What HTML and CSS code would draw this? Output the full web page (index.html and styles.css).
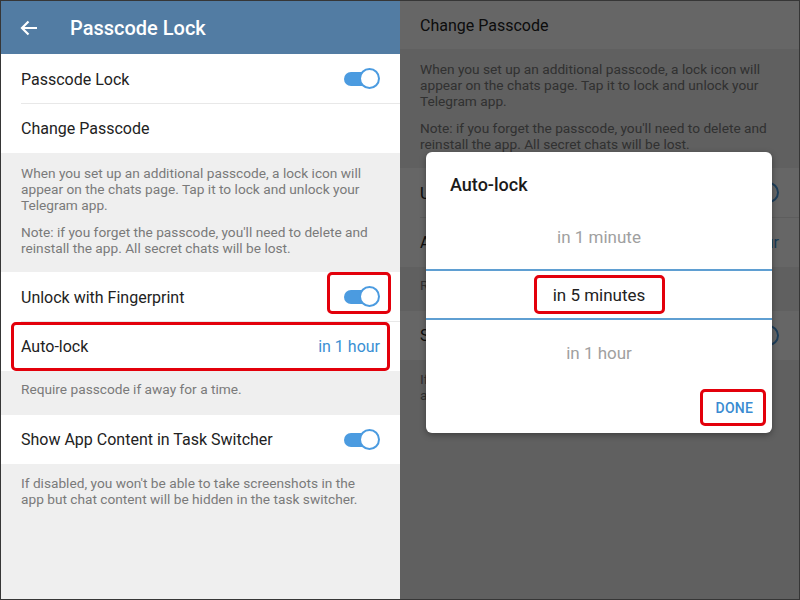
FILE: index.html
```html
<!DOCTYPE html>
<html>
<head>
<meta charset="utf-8">
<link rel="stylesheet" href="styles.css">
</head>
<body>
<div class="frame">
  <section class="panel">
    <header class="appbar">
      <svg class="back" width="18" height="16" viewBox="0 0 18 16"><path d="M17 8H2M8.5 1.5L2 8l6.5 6.5" fill="none" stroke="#fff" stroke-width="2.2"/></svg>
      <h1 class="title">Passcode Lock</h1>
    </header>
    <div class="row divided"><span class="label">Passcode Lock</span><span class="toggle"><span class="thumb"></span></span></div>
    <div class="row"><span class="label">Change Passcode</span></div>
    <div class="info info-main">
      <p>When you set up an additional passcode, a lock icon will appear on the chats page. Tap it to lock and unlock your Telegram app.</p>
      <p>Note: if you forget the passcode, you'll need to delete and reinstall the app. All secret chats will be lost.</p>
    </div>
    <div class="row divided"><span class="label">Unlock with Fingerprint</span><span class="toggle"><span class="thumb"></span><span class="mark mark-toggle"></span></span></div>
    <div class="row autolock"><span class="label">Auto-lock</span><span class="value">in 1 hour</span><span class="mark mark-row"></span></div>
    <div class="info info-short"><p>Require passcode if away for a time.</p></div>
    <div class="row"><span class="label">Show App Content in Task Switcher</span><span class="toggle"><span class="thumb"></span></span></div>
    <div class="info info-fill"><p>If disabled, you won't be able to take screenshots in the app but chat content will be hidden in the task switcher.</p></div>
  </section>

  <section class="panel panel-right">
    <div class="row row-top"><span class="label">Change Passcode</span></div>
    <div class="info info-main">
      <p>When you set up an additional passcode, a lock icon will appear on the chats page. Tap it to lock and unlock your Telegram app.</p>
      <p>Note: if you forget the passcode, you'll need to delete and reinstall the app. All secret chats will be lost.</p>
    </div>
    <div class="row divided"><span class="label">Unlock with Fingerprint</span><span class="toggle"><span class="thumb"></span></span></div>
    <div class="row"><span class="label">Auto-lock</span><span class="value">in 1 hour</span></div>
    <div class="info info-short"><p>Require passcode if away for a time.</p></div>
    <div class="row"><span class="label">Show App Content in Task Switcher</span><span class="toggle"><span class="thumb"></span></span></div>
    <div class="info info-fill"><p>If disabled, you won't be able to take screenshots in the app but chat content will be hidden in the task switcher.</p></div>
    <div class="scrim"></div>
    <div class="dialog">
      <h2 class="dialog-title">Auto-lock</h2>
      <div class="picker">
        <div class="opt dim">in 1 minute</div>
        <div class="opt current"><span class="cur-text">in 5 minutes<span class="mark mark-opt"></span></span></div>
        <div class="opt dim">in 1 hour</div>
      </div>
      <div class="actions"><span class="done">DONE<span class="mark mark-done"></span></span></div>
    </div>
  </section>
</div>
</body>
</html>
```

FILE: styles.css
```css
* { box-sizing: border-box; }
html, body { margin: 0; padding: 0; }
body {
  font-family: Roboto, "Noto Sans", sans-serif;
  background: #333;
}
.frame {
  width: 800px;
  height: 600px;
  border: 1px solid #363636;
  display: flex;
  overflow: hidden;
  background: #efefef;
}
.panel {
  width: 399px;
  display: flex;
  flex-direction: column;
  background: #efefef;
  position: relative;
}
.panel-right {
  width: 399px;
}
.appbar {
  height: 53px;
  background: #527ca3;
  display: flex;
  align-items: center;
  padding-left: 19px;
}
.back { display: block; }
.title {
  margin: 0 0 0 32px;
  color: #fff;
  font-size: 20px;
  font-weight: 500;
}
.row {
  height: 49px;
  background: #fff;
  display: flex;
  align-items: center;
  justify-content: space-between;
  padding: 0 20px 0 20px;
  position: relative;
  flex-shrink: 0;
}
.row.divided { height: 50px; }
.row.divided::after {
  content: "";
  position: absolute;
  left: 20px;
  right: 0;
  bottom: 0;
  height: 1px;
  background: #e8e8e8;
}
.row-top { height: 48px; }
.label {
  font-size: 16px;
  color: #222;
}
.value {
  font-size: 16px;
  color: #3a8fd3;
}
.toggle {
  position: relative;
  width: 34px;
  height: 14px;
  border-radius: 7px;
  background: #4b9be0;
  margin-right: 2px;
}
.thumb {
  position: absolute;
  right: -2px;
  top: -4px;
  width: 21px;
  height: 21px;
  border-radius: 50%;
  background: #fff;
  border: 2px solid #4b9be0;
}
.info {
  padding: 12px 26px 0 20px;
  color: #7a7a7a;
  font-size: 13.7px;
  line-height: 16px;
  flex-shrink: 0;
}
.info p { margin: 0 0 11px 0; }
.info-main { height: 119px; }
.info-short { height: 44px; padding-top: 10px; }
.info-fill { flex: 1; padding-top: 11px; }
.mark {
  position: absolute;
  border: 3px solid #e3000b;
  border-radius: 5px;
  pointer-events: none;
}
.mark-toggle {
  left: -17px;
  right: -13px;
  top: -18px;
  bottom: -10px;
}
.mark-row {
  left: 10px;
  right: 10px;
  top: 0;
  bottom: 0;
}
.scrim {
  position: absolute;
  inset: 0;
  background: rgba(0, 0, 0, 0.6);
}
.dialog {
  position: absolute;
  left: 26px;
  top: 151px;
  width: 346px;
  height: 281px;
  background: #fff;
  border-radius: 6px;
  box-shadow: 0 2px 6px rgba(0, 0, 0, 0.35);
  display: flex;
  flex-direction: column;
}
.dialog-title {
  margin: 0;
  padding: 22px 24px 0 24px;
  height: 60px;
  font-size: 18px;
  font-weight: 500;
  color: #1a1a1a;
}
.picker {
  display: flex;
  flex-direction: column;
}
.opt {
  display: flex;
  align-items: center;
  justify-content: center;
  font-size: 17px;
}
.opt.dim { color: #a0a0a0; }
.opt:first-child { height: 57px; padding-bottom: 8px; }
.opt.current {
  color: #222;
  border-top: 2px solid #5f9fd2;
  border-bottom: 2px solid #5f9fd2;
  height: 51px;
}
.opt:last-child { height: 70px; padding-bottom: 4px; }
.cur-text { position: relative; }
.mark-opt {
  left: -19px;
  right: -20px;
  top: -10px;
  bottom: -9px;
}
.actions {
  display: flex;
  justify-content: flex-end;
  padding-right: 19px;
  padding-top: 10px;
}
.done {
  position: relative;
  color: #3a8bd1;
  font-size: 14px;
  font-weight: 500;
  letter-spacing: 0.2px;
}
.mark-done {
  left: -16px;
  right: -13px;
  top: -11px;
  bottom: -10px;
}
```
